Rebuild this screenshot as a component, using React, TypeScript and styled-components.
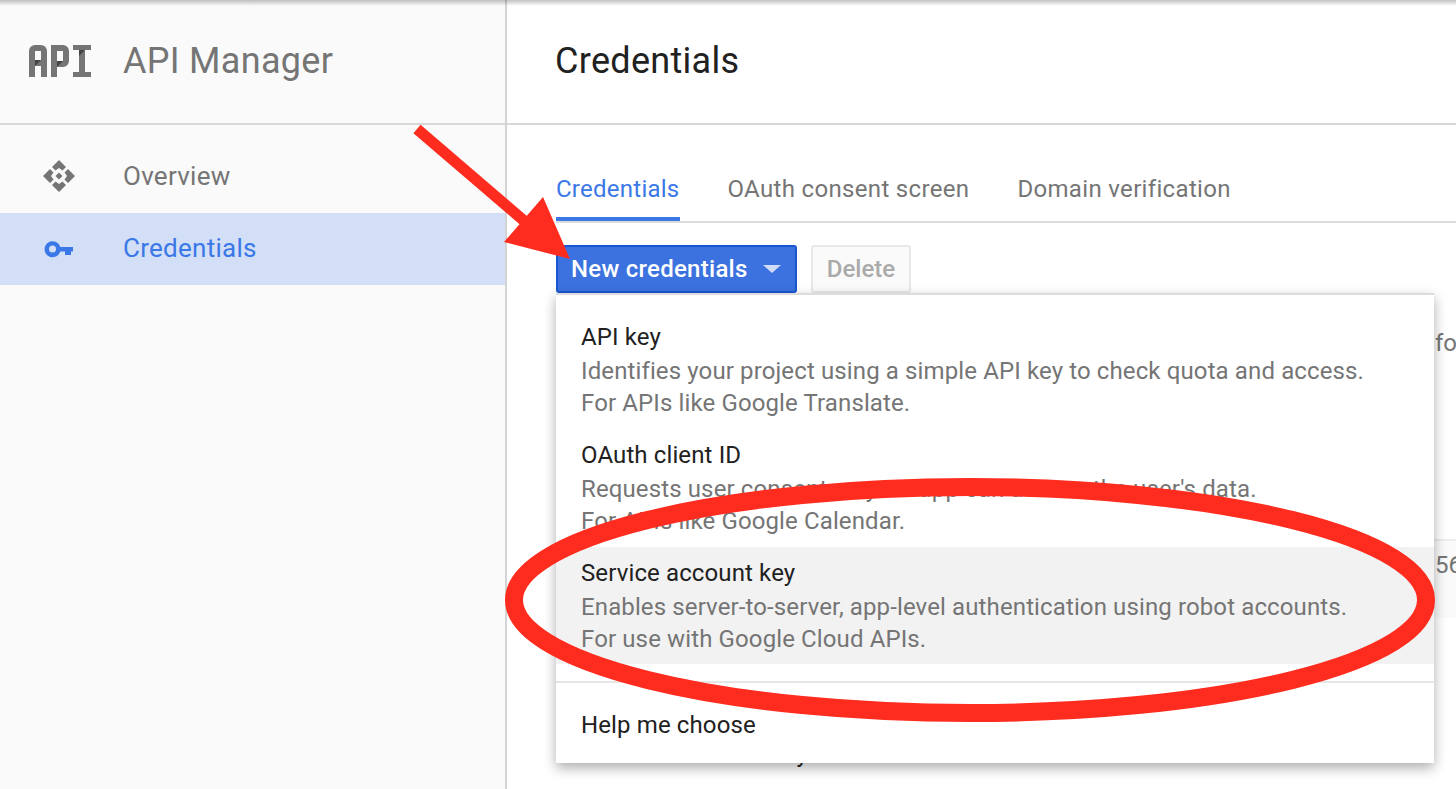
import React from "react";
import styled, { createGlobalStyle } from "styled-components";

const Global = createGlobalStyle`
  html, body { margin: 0; padding: 0; background: #fff; }
  body { font-family: Roboto, "Liberation Sans", sans-serif; }
`;

const Page = styled.div`
  position: relative;
  width: 1456px;
  height: 789px;
  overflow: hidden;
  display: flex;
  background: #fff;
  &::after {
    content: "";
    position: absolute;
    inset: 0 0 auto 0;
    height: 6px;
    background: linear-gradient(to bottom, rgba(0,0,0,.24), rgba(0,0,0,0));
    pointer-events: none;
  }
`;

const Sidebar = styled.aside`
  width: 505px;
  flex: none;
  background: #fafafa;
  border-right: 2px solid #d4d4d4;
`;

const Brand = styled.div`
  height: 125px;
  box-sizing: border-box;
  display: flex;
  align-items: center;
  padding-left: 29px;
  gap: 32px;
  border-bottom: 2px solid #d8d8d8;
`;

const BrandName = styled.div`
  font-size: 36px;
  letter-spacing: 0.3px;
  color: #757575;
  line-height: 40px;
  margin-top: -2px;
`;

const Nav = styled.nav`
  padding-top: 15px;
  display: flex;
  flex-direction: column;
  gap: 1px;
`;

const NavItem = styled.div<{ $active?: boolean }>`
  height: 72px;
  display: flex;
  align-items: center;
  padding-left: 43px;
  gap: 48px;
  font-size: 26px;
  letter-spacing: 0.27px;
  color: ${(p) => (p.$active ? "#3b78e7" : "#757575")};
  background: ${(p) => (p.$active ? "#d2dff6" : "transparent")};
`;

const NavLabel = styled.span<{ $active?: boolean }>`
  margin-top: ${(p) => (p.$active ? "-2px" : "0")};
`;

const NavIcon = styled.svg`
  width: 32px;
  height: 32px;
  flex: none;
`;

const Main = styled.main`
  flex: 1;
  min-width: 0;
  display: flex;
  flex-direction: column;
`;

const TitleBar = styled.header`
  height: 125px;
  box-sizing: border-box;
  flex: none;
  border-bottom: 2px solid #d8d8d8;
  padding-left: 48px;
  display: flex;
  align-items: center;
`;

const Title = styled.h1`
  margin: -2px 0 0;
  font-size: 36px;
  letter-spacing: 0.3px;
  line-height: 40px;
  font-weight: 400;
  color: #212121;
`;

const Tabs = styled.div`
  margin: 45px 0 0 49px;
  height: 51px;
  display: flex;
  gap: 48px;
  border-bottom: 2px solid #dcdcdc;
`;

const Tab = styled.div<{ $active?: boolean }>`
  height: 51px;
  box-sizing: border-box;
  font-size: 24px;
  letter-spacing: ${(p) => (p.$active ? "0.25px" : "0.33px")};
  line-height: 38px;
  color: ${(p) => (p.$active ? "#3b78e7" : "#757575")};
  border-bottom: ${(p) => (p.$active ? "4px solid #3b78e7" : "none")};
`;

const Toolbar = styled.div`
  position: relative;
  margin: 22px 0 0 49px;
  display: flex;
  gap: 14px;
`;

const PrimaryButton = styled.button`
  width: 241px;
  height: 48px;
  box-sizing: border-box;
  padding: 0 0 0 13px;
  display: flex;
  align-items: center;
  gap: 15px;
  background: #3b72e0;
  border: 2px solid #1a56cf;
  border-radius: 3px;
  color: #fff;
  font: 500 24px Roboto, sans-serif;
  letter-spacing: 0.27px;
`;

const Caret = styled.span`
  width: 0;
  height: 0;
  border-left: 9px solid transparent;
  border-right: 9px solid transparent;
  border-top: 8px solid #cfdcf7;
`;

const GhostButton = styled.button`
  width: 100px;
  height: 48px;
  box-sizing: border-box;
  background: #fafafa;
  border: 2px solid #e8e8e8;
  border-radius: 3px;
  color: #aaa;
  font: 500 24px Roboto, sans-serif;
`;

const Menu = styled.div`
  position: absolute;
  left: 0;
  top: 48px;
  width: 878px;
  height: 470px;
  box-sizing: border-box;
  padding-top: 16px;
  background: #fff;
  border-top: 2px solid #dcdcdc;
  box-shadow: 0 5px 12px rgba(0,0,0,.32);
  z-index: 2;
  letter-spacing: 0.12px;
`;

const MenuItem = styled.div<{ $hot?: boolean }>`
  height: 117px;
  margin-bottom: 1px;
  box-sizing: border-box;
  padding: 8px 25px 0;
  background: ${(p) => (p.$hot ? "#f2f2f2" : "transparent")};
`;

const ItemTitle = styled.div`
  font-size: 24px;
  line-height: 36px;
  color: #212121;
`;

const ItemText = styled.div`
  font-size: 24px;
  line-height: 32px;
  color: #757575;
`;

const MenuDivider = styled.div`
  height: 2px;
  margin-top: 17px;
  background: #e6e6e6;
`;

const HelpRow = styled.div`
  padding: 24px 25px 0;
  font-size: 24px;
  line-height: 36px;
  color: #212121;
`;

const Behind = styled.div`
  flex: 1;
  margin-left: 49px;
  display: flex;
  flex-direction: column;
  font-size: 24px;
  color: #757575;
  white-space: nowrap;
`;

const BehindLine = styled.div`
  padding: 32px 0 0 879px;
  line-height: 36px;
  height: 246px;
  box-sizing: border-box;
`;

const BehindRow = styled.div`
  height: 79px;
  box-sizing: border-box;
  border-top: 2px solid #ececec;
  background: #fafafa;
  padding: 6px 0 0 879px;
  line-height: 36px;
`;

const BehindTail = styled.div`
  padding: 122px 0 0 216px;
  line-height: 28px;
  color: #212121;
`;

const Annotation = styled.svg`
  position: absolute;
  inset: 0;
  width: 1456px;
  height: 789px;
  z-index: 3;
  pointer-events: none;
`;

const LogoMark = styled.svg`
  flex: none;
  margin-top: -1px;
`;

const ApiLogo = () => (
  <LogoMark width="62" height="32" viewBox="0 0 62 32">
    <g fill="#757575" fillRule="evenodd">
      <path d="M0 32V6a6 6 0 0 1 6-6h6a6 6 0 0 1 6 6v26h-6V21H6v11zM6 15h6V6H6z" />
      <path d="M22 32V0h12a6 6 0 0 1 6 6v10a6 6 0 0 1-6 6h-6v10zM28 16h6V6h-6z" />
      <path d="M44 0h18v5h-6v22h6v5H44v-5h6V5h-6z" />
    </g>
    <g fill="#444444">
      <path d="M6 21l6-6H6z" />
      <path d="M28 22l6-6h-6z" />
      <path d="M50 5h6l-6 6z" />
    </g>
  </LogoMark>
);

const OverviewIcon = () => (
  <NavIcon viewBox="0 0 32 32">
    <g fill="#757575">
      <path d="M16 0l7 7-3.500 3.500L16 8l-3.500 2.500L9 7z" />
      <path d="M16 32l7-7-3.500-3.500L16 24l-3.500-2.500L9 25z" />
      <path d="M0 16l7-7 3.500 3.500L8 16l2.500 3.500L7 23z" />
      <path d="M32 16l-7-7-3.500 3.500L24 16l-2.500 3.500L25 23z" />
      <path d="M16 12.500l3.500 3.500-3.500 3.500-3.500-3.500z" />
    </g>
  </NavIcon>
);

const KeyIcon = () => (
  <NavIcon viewBox="0 0 32 32">
    <path
      d="M17.250 14H30V18.500H28V22H22V18.500H17.250A8 8 0 1 1 17.250 14ZM9.500 12.500a3.500 3.500 0 1 0 0 7 3.500 3.500 0 0 0 0-7Z"
      fill="#3b78e7"
      fillRule="evenodd"
    />
  </NavIcon>
);

export default function App() {
  return (
    <Page>
      <Global />
      <Sidebar>
        <Brand>
          <ApiLogo />
          <BrandName>API Manager</BrandName>
        </Brand>
        <Nav>
          <NavItem>
            <OverviewIcon />
            <NavLabel>Overview</NavLabel>
          </NavItem>
          <NavItem $active>
            <KeyIcon />
            <NavLabel $active>Credentials</NavLabel>
          </NavItem>
        </Nav>
      </Sidebar>
      <Main>
        <TitleBar>
          <Title>Credentials</Title>
        </TitleBar>
        <Tabs>
          <Tab $active>Credentials</Tab>
          <Tab>OAuth consent screen</Tab>
          <Tab>Domain verification</Tab>
        </Tabs>
        <Toolbar>
          <PrimaryButton>
            New credentials
            <Caret />
          </PrimaryButton>
          <GhostButton>Delete</GhostButton>
          <Menu>
            <MenuItem>
              <ItemTitle>API key</ItemTitle>
              <ItemText>Identifies your project using a simple API key to check quota and access.</ItemText>
              <ItemText>For APIs like Google Translate.</ItemText>
            </MenuItem>
            <MenuItem>
              <ItemTitle>OAuth client ID</ItemTitle>
              <ItemText>Requests user consent so your app can access the user's data.</ItemText>
              <ItemText>For APIs like Google Calendar.</ItemText>
            </MenuItem>
            <MenuItem $hot>
              <ItemTitle>Service account key</ItemTitle>
              <ItemText>Enables server-to-server, app-level authentication using robot accounts.</ItemText>
              <ItemText>For use with Google Cloud APIs.</ItemText>
            </MenuItem>
            <MenuDivider />
            <HelpRow>Help me choose</HelpRow>
          </Menu>
        </Toolbar>
        <Behind>
          <BehindLine>fo</BehindLine>
          <BehindRow>56</BehindRow>
          <BehindTail>key</BehindTail>
        </Behind>
      </Main>
      <Annotation viewBox="0 0 1456 789">
        <ellipse cx="970" cy="600" rx="456" ry="113" fill="none" stroke="#fe2c1f" strokeWidth="18" />
        <line x1="417" y1="129" x2="530" y2="226" stroke="#fe2c1f" strokeWidth="11" />
        <polygon points="543,197 570,259 504,242" fill="#fe2c1f" />
      </Annotation>
    </Page>
  );
}
